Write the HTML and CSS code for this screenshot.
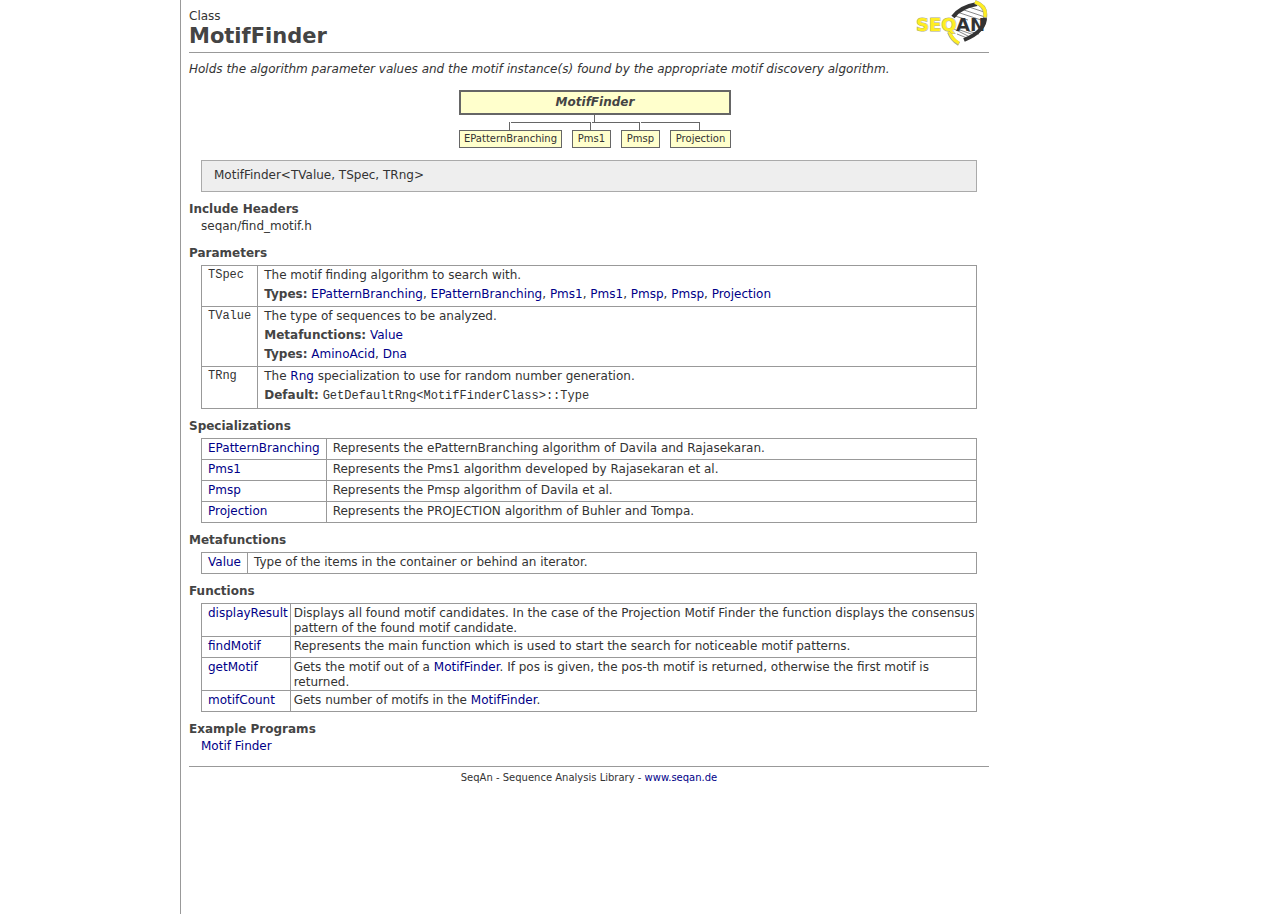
FILE: index.html
```html
<!DOCTYPE html>
<html lang="en">
<head>
<meta charset="utf-8">
<title>MotifFinder - SeqAn</title>
<link rel="stylesheet" href="styles.css">
</head>
<body>
<div class="page">
  <header class="page-header">
    <div class="page-title">
      <div class="page-kind">Class</div>
      <h1>MotifFinder</h1>
    </div>
    <svg class="logo" width="73" height="47" viewBox="0 0 73 47" role="img" aria-label="SeqAn">
      <path d="M39 14 Q48 5 60 4 Q70 10 69 22 Q66 36 50 40 Q40 38 36 30 Z" fill="#fff"/>
      <g stroke="#888" stroke-width="1">
        <path d="M50 6 L68 12 M45 9 L69 17 M41 12 L68 21 M39 16 L52 20 M38 29 L54 37 M41 34 L51 38 M44 30 L58 35 M52 31 L63 34"/>
      </g>
      <path d="M37 17 Q44 7 61 4" fill="none" stroke="#333" stroke-width="4"/>
      <path d="M69 16 Q70 31 48 40" fill="none" stroke="#333" stroke-width="4"/>
      <path d="M59 2 Q71 6 69 18" fill="none" stroke="#aa8" stroke-width="4"/>
      <path d="M59 2 Q71 6 69 17" fill="none" stroke="#fe2" stroke-width="3"/>
      <path d="M33 32 Q36 40 43 44" fill="none" stroke="#aa8" stroke-width="4"/>
      <path d="M33 31 Q36 40 43 43" fill="none" stroke="#fe2" stroke-width="3"/>
      <text x="0" y="31" class="logo-seq">SEQ</text>
      <text x="40" y="31" class="logo-an">AN</text>
    </svg>
  </header>

  <p class="summary">Holds the algorithm parameter values and the motif instance(s) found by the appropriate motif discovery algorithm.</p>

  <div class="tree">
    <div class="tree-root">MotifFinder</div>
    <svg class="tree-lines" width="272" height="15" viewBox="0 0 272 15" aria-hidden="true">
      <path d="M135.5 0V7.5M52 7.5H131M133 7.5H180M182 7.5H241M50.5 7V15M131.5 7V15M180.5 7V15M240.5 7V15" fill="none" stroke="#666"/>
    </svg>
    <div class="tree-children">
      <a href="#">EPatternBranching</a>
      <a href="#">Pms1</a>
      <a href="#">Pmsp</a>
      <a href="#">Projection</a>
    </div>
  </div>

  <div class="signature">MotifFinder&lt;TValue, TSpec, TRng&gt;</div>

  <h2>Include Headers</h2>
  <div class="text-block">seqan/find_motif.h</div>

  <h2>Parameters</h2>
  <table class="params">
    <tr>
      <th scope="row">TSpec</th>
      <td>
        <div>The motif finding algorithm to search with.</div>
        <div><b>Types:</b> <a href="#">EPatternBranching</a>, <a href="#">EPatternBranching</a>, <a href="#">Pms1</a>, <a href="#">Pms1</a>, <a href="#">Pmsp</a>, <a href="#">Pmsp</a>, <a href="#">Projection</a></div>
      </td>
    </tr>
    <tr>
      <th scope="row">TValue</th>
      <td>
        <div>The type of sequences to be analyzed.</div>
        <div><b>Metafunctions:</b> <a href="#">Value</a></div>
        <div><b>Types:</b> <a href="#">AminoAcid</a>, <a href="#">Dna</a></div>
      </td>
    </tr>
    <tr>
      <th scope="row">TRng</th>
      <td>
        <div>The <a href="#">Rng</a> specialization to use for random number generation.</div>
        <div><b>Default:</b> <code>GetDefaultRng&lt;MotifFinderClass&gt;::Type</code></div>
      </td>
    </tr>
  </table>

  <h2>Specializations</h2>
  <table>
    <tr><th scope="row"><a href="#">EPatternBranching</a></th><td>Represents the ePatternBranching algorithm of Davila and Rajasekaran.</td></tr>
    <tr><th scope="row"><a href="#">Pms1</a></th><td>Represents the Pms1 algorithm developed by Rajasekaran et al.</td></tr>
    <tr><th scope="row"><a href="#">Pmsp</a></th><td>Represents the Pmsp algorithm of Davila et al.</td></tr>
    <tr><th scope="row"><a href="#">Projection</a></th><td>Represents the PROJECTION algorithm of Buhler and Tompa.</td></tr>
  </table>

  <h2>Metafunctions</h2>
  <table>
    <tr><th scope="row"><a href="#">Value</a></th><td>Type of the items in the container or behind an iterator.</td></tr>
  </table>

  <h2>Functions</h2>
  <table class="functions">
    <tr><th scope="row"><a href="#">displayResult</a></th><td>Displays all found motif candidates. In the case of the Projection Motif Finder the function displays the consensus pattern of the found motif candidate.</td></tr>
    <tr><th scope="row"><a href="#">findMotif</a></th><td>Represents the main function which is used to start the search for noticeable motif patterns.</td></tr>
    <tr><th scope="row"><a href="#">getMotif</a></th><td>Gets the motif out of a <a href="#">MotifFinder</a>. If pos is given, the pos-th motif is returned, otherwise the first motif is <br>returned.</td></tr>
    <tr><th scope="row"><a href="#">motifCount</a></th><td>Gets number of motifs in the <a href="#">MotifFinder</a>.</td></tr>
  </table>

  <h2>Example Programs</h2>
  <div class="text-block"><a href="#">Motif Finder</a></div>

  <footer>SeqAn - Sequence Analysis Library - <a href="#">www.seqan.de</a></footer>
</div>
</body>
</html>
```
FILE: styles.css
```css
body {
  min-height: 100vh;
  margin: 0 0 0 180px;
  box-sizing: border-box;
  border-left: 1px solid #999;
  padding: 0 8px;
  background: #fff;
  color: #333;
  font: 12px/15px Verdana, "DejaVu Sans", sans-serif;
}

.page {
  max-width: 800px;
}

a {
  color: #008;
  text-decoration: none;
}

.page-header {
  display: flex;
  justify-content: space-between;
  border-bottom: 1px solid #999;
}

.page-title {
  padding-top: 9px;
}

h1 {
  margin: 0;
  color: #444;
  font-size: 21px;
  line-height: 25px;
}

.logo {
  margin-bottom: 5px;
}

.logo-seq,
.logo-an {
  font: bold 18px "DejaVu Sans", sans-serif;
}

.logo-seq {
  fill: #fe2;
  stroke: #aa8;
  stroke-width: 1px;
  paint-order: stroke;
}

.logo-an {
  fill: #333;
}

.summary {
  margin: 9px 0 13px;
  font-style: italic;
}

.tree {
  width: 272px;
  margin: 0 auto;
  padding-left: 12px;
}

.tree-root {
  border: 2px solid #666;
  background: #ffc;
  color: #444;
  font-weight: bold;
  font-style: italic;
  line-height: 21px;
  text-align: center;
}

.tree-lines {
  display: block;
}

.tree-children {
  display: grid;
  grid-template-columns: 103px 39px 39px 61px;
  column-gap: 10px;
}

.tree-children a {
  border: 1px solid #666;
  background: #ffc;
  color: #333;
  font-size: 10px;
  line-height: 16px;
  text-align: center;
}

.signature {
  margin: 12px 12px 10px;
  border: 1px solid #aaa;
  padding: 7px 12px 8px;
  background: #eee;
}

h2 {
  margin: 10px 0 2px;
  color: #444;
  font-size: 12px;
  line-height: 15px;
}

.text-block {
  margin: 0 12px 12px;
}

table {
  width: calc(100% - 24px);
  margin: 4px 12px 0;
  border-collapse: collapse;
}

th,
td {
  height: 18px;
  border: 1px solid #999;
  padding: 2px 6px 0;
  text-align: left;
  vertical-align: top;
}

th {
  width: 1px;
  font-weight: normal;
  white-space: nowrap;
}

td {
  padding-right: 0;
}

.functions th {
  padding-right: 2px;
}

.functions td {
  padding-left: 3px;
}

.params th,
code {
  font-family: "Courier New", "Liberation Mono", monospace;
  font-size: 12px;
}

.params td div {
  margin-bottom: 4px;
}

b {
  color: #444;
}

footer {
  border-top: 1px solid #999;
  padding-top: 3px;
  font-size: 10px;
  text-align: center;
}
```
